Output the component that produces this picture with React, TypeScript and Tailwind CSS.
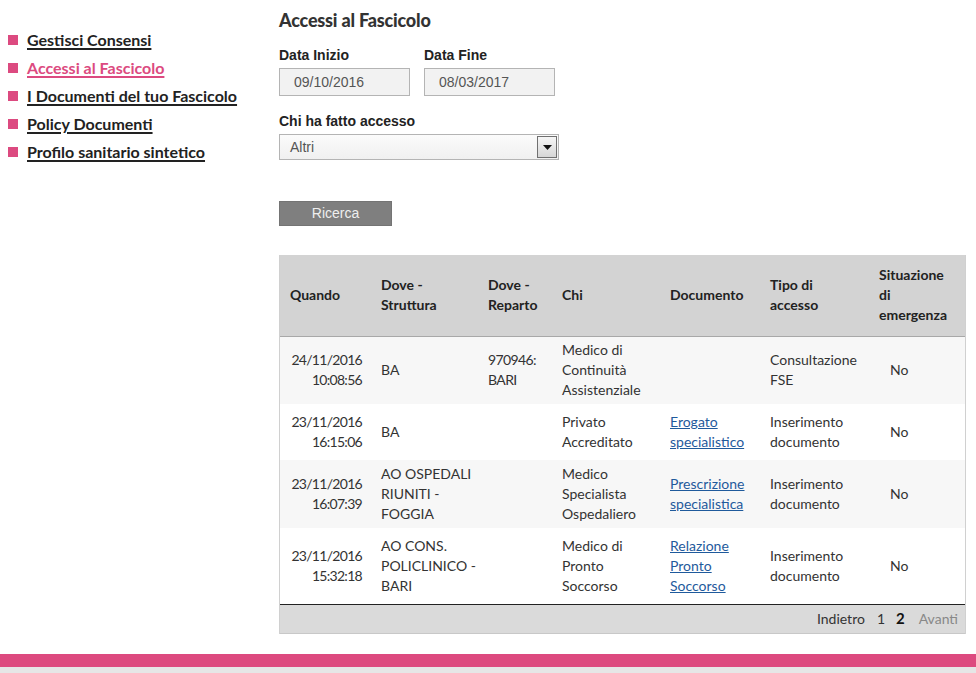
import React from "react";

const menu = [
  { label: "Gestisci Consensi", active: false },
  { label: "Accessi al Fascicolo", active: true },
  { label: "I Documenti del tuo Fascicolo", active: false },
  { label: "Policy Documenti", active: false },
  { label: "Profilo sanitario sintetico", active: false },
];

type Row = {
  date: string;
  time: string;
  struttura: string[];
  reparto: string[];
  chi: string[];
  doc: string[];
  tipo: string[];
  h: string;
  bg: string;
};

const rows: Row[] = [
  {
    date: "24/11/2016",
    time: "10:08:56",
    struttura: ["BA"],
    reparto: ["970946:", "BARI"],
    chi: ["Medico di", "Continuità", "Assistenziale"],
    doc: [],
    tipo: ["Consultazione", "FSE"],
    h: "h-[68px]",
    bg: "bg-[#f7f7f7]",
  },
  {
    date: "23/11/2016",
    time: "16:15:06",
    struttura: ["BA"],
    reparto: [],
    chi: ["Privato", "Accreditato"],
    doc: ["Erogato", "specialistico"],
    tipo: ["Inserimento", "documento"],
    h: "h-[56px]",
    bg: "bg-white",
  },
  {
    date: "23/11/2016",
    time: "16:07:39",
    struttura: ["AO OSPEDALI", "RIUNITI -", "FOGGIA"],
    reparto: [],
    chi: ["Medico", "Specialista", "Ospedaliero"],
    doc: ["Prescrizione", "specialistica"],
    tipo: ["Inserimento", "documento"],
    h: "h-[68px]",
    bg: "bg-[#f7f7f7]",
  },
  {
    date: "23/11/2016",
    time: "15:32:18",
    struttura: ["AO CONS.", "POLICLINICO -", "BARI"],
    reparto: [],
    chi: ["Medico di", "Pronto", "Soccorso"],
    doc: ["Relazione", "Pronto", "Soccorso"],
    tipo: ["Inserimento", "documento"],
    h: "h-[76px]",
    bg: "bg-white",
  },
];

function Lines({ lines, className = "" }: { lines: string[]; className?: string }) {
  return (
    <>
      {lines.map((l, i) => (
        <div key={i} className={className}>
          {l}
        </div>
      ))}
    </>
  );
}

export default function App() {
  return (
    <div className="w-[976px] h-[673px] bg-white overflow-hidden relative flex flex-col font-['Lato',sans-serif] text-[#333]">
      <div className="flex flex-1">
        {/* Sidebar */}
        <div className="w-[279px] pt-[26px] pl-[8px]">
          {menu.map((m) => (
            <div key={m.label} className="flex items-center h-[28px]">
              <span className="w-[10px] h-[10px] bg-[#dc4a80] mr-[9px] shrink-0" />
              <a
                href="#"
                className={`text-[16px] font-bold underline underline-offset-[2px] decoration-[1.5px] leading-[20px] ${
                  m.active ? "text-[#dc4a80]" : "text-[#222]"
                }`}
              >
                {m.label}
              </a>
            </div>
          ))}
        </div>

        {/* Main */}
        <div className="w-[687px] pt-[9px]">
          <h1 className="text-[18px] font-black leading-[22px] text-[#333] tracking-[-0.2px]">
            Accessi al Fascicolo
          </h1>
          <div className="flex gap-[14px] mt-[16px] font-['Liberation_Sans',Arial,sans-serif]">
            <div className="flex flex-col">
              <label className="text-[14px] font-bold leading-[16px] text-[#222]">Data Inizio</label>
              <div className="mt-[5px] w-[131px] h-[28px] bg-[#f2f2f2] border border-[#b4b4b4] flex items-center pl-[14px] text-[14px] text-[#555]">
                09/10/2016
              </div>
            </div>
            <div className="flex flex-col">
              <label className="text-[14px] font-bold leading-[16px] text-[#222]">Data Fine</label>
              <div className="mt-[5px] w-[131px] h-[28px] bg-[#f2f2f2] border border-[#b4b4b4] flex items-center pl-[14px] text-[14px] text-[#555]">
                08/03/2017
              </div>
            </div>
          </div>
          <div className="mt-[17px] font-['Liberation_Sans',Arial,sans-serif]">
            <label className="block text-[14px] font-bold leading-[16px] text-[#222]">Chi ha fatto accesso</label>
            <div className="mt-[5px] w-[280px] h-[26px] border border-[#b4b4b4] bg-[linear-gradient(#fbfbfb,#f0f0f0)] flex items-center justify-between pl-[10px] pr-[1px]">
              <span className="text-[14px] text-[#555]">Altri</span>
              <span className="w-[20px] h-[22px] border border-[#707070] bg-[linear-gradient(#f6f6f6,#d6d6d6)] flex items-center justify-center">
                <svg width="9" height="5" viewBox="0 0 9 5">
                  <path d="M0 0 H9 L4.5 5 Z" fill="#111" />
                </svg>
              </span>
            </div>
          </div>
          <button className="mt-[41px] w-[113px] h-[25px] bg-[#7f7f7f] text-[#eee] text-[14px] font-['Liberation_Sans',Arial,sans-serif] flex items-center justify-center border border-[#747474]">
            Ricerca
          </button>

          {/* Table */}
          <div className="mt-[29px] w-[687px] border-l border-r border-[#d0d0d0]">
            <table className="table-fixed border-collapse w-full text-[14px] leading-[20px]">
              <colgroup>
                <col className="w-[91px]" />
                <col className="w-[107px]" />
                <col className="w-[74px]" />
                <col className="w-[108px]" />
                <col className="w-[100px]" />
                <col className="w-[109px]" />
                <col />
              </colgroup>
              <thead>
                <tr className="bg-[#d3d3d3] h-[81px] border-b border-[#a8a8a8] text-[#222]">
                  <th className="text-left font-bold align-middle pl-[10px]">Quando</th>
                  <th className="text-left font-bold align-middle pl-[10px]">
                    <Lines lines={["Dove -", "Struttura"]} />
                  </th>
                  <th className="text-left font-bold align-middle pl-[10px]">
                    <Lines lines={["Dove -", "Reparto"]} />
                  </th>
                  <th className="text-left font-bold align-middle pl-[10px]">Chi</th>
                  <th className="text-left font-bold align-middle pl-[10px]">Documento</th>
                  <th className="text-left font-bold align-middle pl-[10px]">
                    <Lines lines={["Tipo di", "accesso"]} />
                  </th>
                  <th className="text-left font-bold align-middle pl-[10px]">
                    <Lines lines={["Situazione", "di", "emergenza"]} />
                  </th>
                </tr>
              </thead>
              <tbody>
                {rows.map((r, i) => (
                  <tr key={i} className={`${r.h} ${r.bg} ${i === rows.length - 1 ? "border-b border-[#222]" : ""}`}>
                    <td className="align-middle text-right pr-[9px]">
                      <Lines lines={[r.date, r.time]} className="tracking-[-0.7px]" />
                    </td>
                    <td className="align-middle pl-[10px]">
                      <Lines lines={r.struttura} />
                    </td>
                    <td className="align-middle pl-[10px]">
                      <Lines lines={r.reparto} className="tracking-[-0.6px]" />
                    </td>
                    <td className="align-middle pl-[10px]">
                      <Lines lines={r.chi} />
                    </td>
                    <td className="align-middle pl-[10px]">
                      {r.doc.map((d, j) => (
                        <div key={j}>
                          <a href="#" className="text-[#1f5a9c] underline">
                            {d}
                          </a>
                        </div>
                      ))}
                    </td>
                    <td className="align-middle pl-[10px]">
                      <Lines lines={r.tipo} />
                    </td>
                    <td className="align-middle pl-[21px]">No</td>
                  </tr>
                ))}
              </tbody>
            </table>
            <div className="h-[29px] bg-[#dadada] border-b border-[#c8c8c8] flex items-center justify-end pr-[7px] text-[14px] text-[#333] gap-[11px]">
              <span className="mr-[1px]">Indietro</span>
              <span>1</span>
              <span className="font-bold text-[#111] text-[15px]">2</span>
              <span className="text-[#888] ml-[3px]">Avanti</span>
            </div>
          </div>
        </div>
      </div>
      <div className="h-[13px] bg-[#dd4a7f]" />
      <div className="h-[6px] bg-[#e6e6e6]" />
    </div>
  );
}
